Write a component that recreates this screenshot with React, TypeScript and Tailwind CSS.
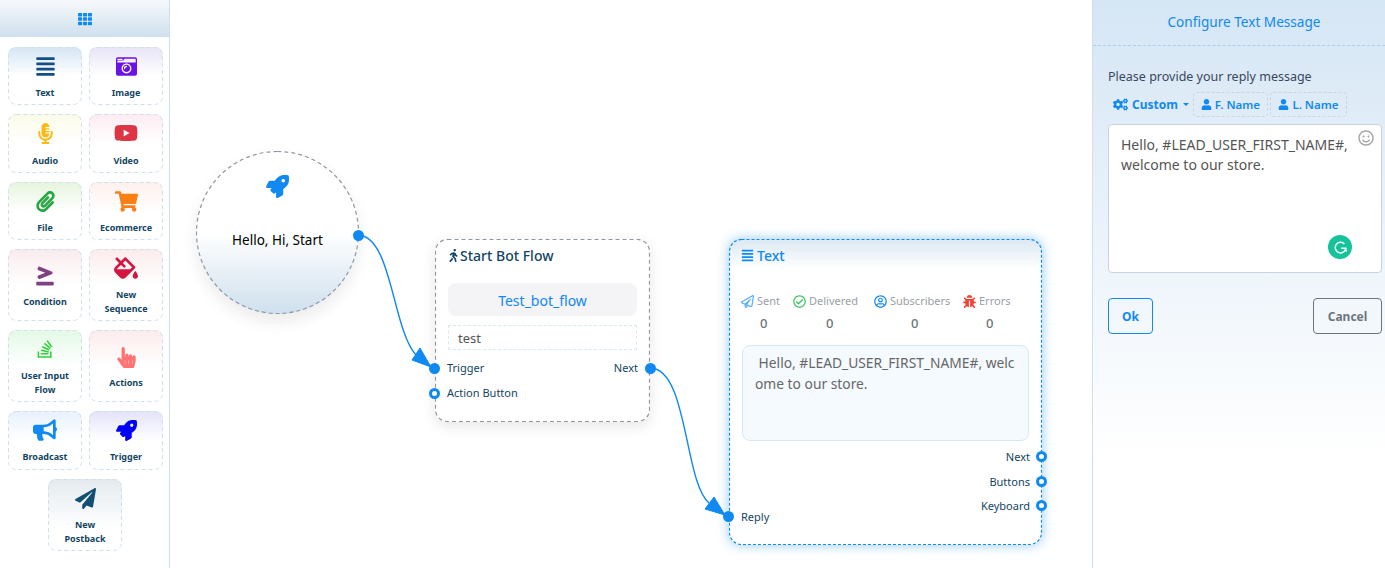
import React from "react";
import {
  FaAlignJustify, FaCameraRetro, FaMicrophoneAlt, FaYoutube, FaPaperclip, FaShoppingCart, FaGreaterThanEqual,
  FaFillDrip, FaStackOverflow, FaHandPointer, FaBullhorn, FaRocket, FaPaperPlane, FaTh, FaWalking,
  FaRegPaperPlane, FaRegCheckCircle, FaRegUserCircle, FaBug, FaCogs, FaUser, FaRegSmile,
} from "react-icons/fa";

const font = { fontFamily: '"Noto Sans", "Open Sans", sans-serif' };

function Dash({ color, rx, dash = "4 3", sw = 1 }: { color: string; rx: string | number; dash?: string; sw?: number }) {
  return (
    <svg className="pointer-events-none absolute left-[-2px] top-[-2px] h-[calc(100%+4px)] w-[calc(100%+4px)]">
      <rect x="0.5" y="0.5" rx={rx} ry={rx} fill="none" stroke={color} strokeWidth={sw} strokeDasharray={dash} className="[height:calc(100%-1px)] [width:calc(100%-1px)]" />
    </svg>
  );
}

function Card({ icon, label, grad, h, pt = "pt-[4px]", mt = "mt-[7px]" }: { icon: React.ReactNode; label: React.ReactNode; grad: string; h: string; pt?: string; mt?: string }) {
  return (
    <div className={`relative flex flex-col items-center rounded-lg border-2 border-transparent bg-origin-border ${pt} ${grad} ${h}`}>
      <Dash color="#cfdfee" rx={8} />
      <div className="flex h-[26px] items-center justify-center">{icon}</div>
      <div className={`text-center text-[9px] font-bold leading-[13.5px] text-[#134563] ${mt}`}>{label}</div>
    </div>
  );
}

function Port({ filled, className }: { filled?: boolean; className: string }) {
  return (
    <span className={`absolute h-[11px] w-[11px] rounded-full border-[3px] border-[#1089f2] ${filled ? "bg-[#1089f2]" : "bg-white"} ${className}`} />
  );
}

function Sidebar() {
  return (
    <aside className="h-full w-[170px] shrink-0 border-r border-[#cfdfee] bg-white">
      <div className="flex h-[37px] items-center justify-center bg-gradient-to-b from-[#f6f9fb] to-[#cfe0ee]">
        <FaTh className="text-[14px] text-[#1089f2]" />
      </div>
      <div className="grid grid-cols-[74px_74px] gap-x-[7px] gap-y-[9px] pl-[8px] pt-[10px]">
        <Card h="h-[58px]" grad="bg-gradient-to-b from-[#d4e6f4] to-white to-50%" icon={<FaAlignJustify className="text-[21px] text-[#134f86]" />} label="Text" />
        <Card h="h-[58px]" grad="bg-gradient-to-b from-[#e8e4f6] to-white to-50%" icon={<FaCameraRetro className="text-[21px] text-[#6a11e8]" />} label="Image" />
        <Card h="h-[59px]" mt="mt-[8px]" grad="bg-gradient-to-b from-[#fbfbe9] to-white to-50%" icon={<FaMicrophoneAlt className="text-[21px] text-[#fdb913]" />} label="Audio" />
        <Card h="h-[59px]" mt="mt-[8px]" grad="bg-gradient-to-b from-[#fcecf3] to-white to-50%" icon={<FaYoutube className="text-[24px] text-[#dc3545]" />} label="Video" />
        <Card h="h-[58px]" grad="bg-gradient-to-b from-[#e6f4dc] to-white to-50%" icon={<FaPaperclip className="text-[21px] text-[#28a745]" />} label="File" />
        <Card h="h-[58px]" grad="bg-gradient-to-b from-[#fdf0ec] to-white to-50%" icon={<FaShoppingCart className="text-[23px] text-[#fd7e14]" />} label="Ecommerce" />
        <Card h="h-[72px]" pt="pt-[12px]" mt="mt-[6px]" grad="bg-gradient-to-b from-[#f9ebed] to-white to-50%" icon={<FaGreaterThanEqual className="text-[20px] text-[#7f4182]" />} label="Condition" />
        <Card h="h-[72px]" grad="bg-gradient-to-b from-[#fbecec] to-white to-50%" icon={<FaFillDrip className="text-[24px] text-[#d3153f]" />} label={<>New<br />Sequence</>} />
        <Card h="h-[72px]" grad="bg-gradient-to-b from-[#e3f9e5] to-white to-50%" icon={<FaStackOverflow className="text-[20px] text-[#2fd13d]" />} label={<>User Input<br />Flow</>} />
        <Card h="h-[72px]" pt="pt-[12px]" mt="mt-[6px]" grad="bg-gradient-to-b from-[#fcecec] to-white to-50%" icon={<FaHandPointer className="text-[21px] text-[#ff7373]" />} label="Actions" />
        <Card h="h-[59px]" grad="bg-gradient-to-b from-[#e9f1fd] to-white to-50%" icon={<FaBullhorn className="text-[24px] text-[#1089f2]" />} label="Broadcast" />
        <Card h="h-[59px]" grad="bg-gradient-to-b from-[#e4e2fa] to-white to-50%" icon={<FaRocket className="text-[21px] text-[#0000f5]" />} label="Trigger" />
      </div>
      <div className="pl-[48px] pt-[9px]">
        <Card h="h-[72px] w-[74px]" grad="bg-gradient-to-b from-[#e4ebef] to-white to-70%" icon={<FaPaperPlane className="text-[21px] text-[#134f72]" />} label={<>New<br />Postback</>} />
      </div>
    </aside>
  );
}

function Wires() {
  return (
    <svg className="pointer-events-none absolute left-[-170px] top-0 z-10 h-[568px] w-[1385px]" viewBox="0 0 1385 568" fill="none">
      <path d="M358 235 C392 236 392 328 416 355" stroke="#1089f2" strokeWidth="1.4" />
      <path d="M431 367 L420 348 L412 360 Z" fill="#1089f2" stroke="#1089f2" strokeWidth="1" strokeLinejoin="round" />
      <path d="M650 368 C688 368 684 482 709 503" stroke="#1089f2" strokeWidth="1.4" />
      <path d="M725 515 L714 497 L705 509 Z" fill="#1089f2" stroke="#1089f2" strokeWidth="1" strokeLinejoin="round" />
    </svg>
  );
}

function StartCircle() {
  return (
    <div className="absolute left-[26px] top-[151px] flex h-[163px] w-[163px] flex-col items-center rounded-full border-2 border-transparent bg-gradient-to-b from-white from-50% to-[#cfe0ee] bg-origin-border pt-[22px] shadow-[0_8px_16px_rgba(0,0,0,0.08)]">
      <Dash color="#8f98a0" rx={81} sw={1.2} />
      <FaRocket className="text-[23px] text-[#1089f2]" />
      <div className="mt-[32px] text-[13.5px] leading-[20px] text-black">Hello, Hi, Start</div>
      <Port filled className="right-[-7px] top-[77px]" />
    </div>
  );
}

function StartBotFlow() {
  return (
    <div className="absolute left-[265px] top-[239px] h-[183px] w-[215px] rounded-xl border-2 border-transparent bg-white px-[11px] pt-[4px] shadow-[0_4px_14px_rgba(0,0,0,0.1)]">
      <Dash color="#8f98a0" rx={12} sw={1.2} />
      <div className="ml-[-1px] flex h-[21px] items-center text-[14px] font-medium text-[#134563]">
        <FaWalking className="text-[13px]" /> Start Bot Flow
      </div>
      <div className="mt-[17px] flex h-[33px] items-center justify-center rounded-lg bg-[#f4f3f5] pt-[1px] text-[14px] text-[#1089f2]">Test_bot_flow</div>
      <div className="mt-[9px] flex h-[25px] items-center border border-dashed border-[#d8e8f5] pl-[9px] pt-[2px] text-[13px] text-[#555]">test</div>
      <div className="mx-[-1px] mt-[9px] flex h-[18px] items-center justify-between text-[11px] text-[#134563]">
        <span>Trigger</span><span>Next</span>
      </div>
      <div className="ml-[-1px] mt-[7px] flex h-[18px] items-center text-[11px] text-[#134563]">Action Button</div>
      <Port filled className="left-[-8px] top-[122px]" />
      <Port className="left-[-8px] top-[147px]" />
      <Port filled className="right-[-8px] top-[122px]" />
    </div>
  );
}

function Stat({ icon, label, pad }: { icon: React.ReactNode; label: string; pad: string }) {
  return (
    <div>
      <div className="flex h-[16px] items-center gap-[3px] whitespace-nowrap text-[11px] text-[#9aa0a6]">{icon}{label}</div>
      <div className={`mt-[5px] text-[13px] font-medium leading-[18px] text-[#6c757d] ${pad}`}>0</div>
    </div>
  );
}

function TextNode() {
  return (
    <div className="absolute left-[559px] top-[239px] h-[306px] w-[313px] rounded-xl border-2 border-transparent bg-white bg-gradient-to-b from-[#dbe8f2] to-white to-[30px] bg-origin-border px-[11px] pt-[4px] shadow-[0_0_12px_rgba(16,137,242,0.45)]">
      <Dash color="#1089f2" rx={12} dash="3 2" sw={1.2} />
      <div className="ml-[-1px] flex h-[21px] items-center gap-[3px] text-[14px] font-medium text-[#1089f2]">
        <FaAlignJustify className="text-[13px]" /> Text
      </div>
      <div className="ml-[-1px] mt-[27px] grid grid-cols-[52px_81px_89px_48px]">
        <Stat pad="pl-[19px]" icon={<FaRegPaperPlane className="text-[13px] text-[#5aaef5]" />} label="Sent" />
        <Stat pad="pl-[33px]" icon={<FaRegCheckCircle className="text-[13px] text-[#3cc35f]" />} label="Delivered" />
        <Stat pad="pl-[37px]" icon={<FaRegUserCircle className="text-[13px] text-[#1089f2]" />} label="Subscribers" />
        <Stat pad="pl-[23px]" icon={<FaBug className="text-[13px] text-[#f44336]" />} label="Errors" />
      </div>
      <div className="mt-[13px] h-[96px] w-[287px] rounded-lg border border-[#d5e8f8] bg-[#f5faff] pl-[12px] pt-[6px] text-[13.8px] leading-[21px] text-[#666]">
        &nbsp;Hello, #LEAD_USER_FIRST_NAME#, welc<br />ome to our store.
      </div>
      <div className="mr-[-1px] mt-[7px] flex flex-col items-end text-[11px] leading-[18px] text-[#134563]">
        <span>Next</span><span className="mt-[7px]">Buttons</span><span className="mt-[6px]">Keyboard</span>
      </div>
      <div className="ml-[-1px] mt-[-7px] text-[11px] leading-[18px] text-[#134563]">Reply</div>
      <Port className="right-[-7px] top-[210px]" />
      <Port className="right-[-7px] top-[235px]" />
      <Port className="right-[-7px] top-[259px]" />
      <Port filled className="left-[-8px] top-[270px]" />
    </div>
  );
}

function NameChip({ w, label }: { w: string; label: string }) {
  return (
    <span className={`relative flex h-[25px] items-center justify-center gap-[3px] rounded border-2 border-transparent ${w}`}>
      <Dash color="#cfd4d8" rx={3} dash="3 2" />
      <FaUser className="text-[11px]" /> {label}
    </span>
  );
}

function Panel() {
  return (
    <aside className="h-full w-[293px] shrink-0 border-l border-[#cfdfee] bg-gradient-to-b from-[#d5e6f5] to-white to-80%">
      <div className="flex h-[46px] items-center justify-center border-b border-dashed border-[#a9cfee] pl-[10px] text-[13.6px] text-[#1089f2]">Configure Text Message</div>
      <div className="pl-[15px] pr-[3px]">
        <div className="mt-[22px] text-[12.5px] leading-[18px] text-[#3a4660]">Please provide your reply message</div>
        <div className="mt-[6px] flex h-[25px] items-center gap-[2px] text-[11.5px] font-semibold text-[#1089f2]">
          <span className="mr-[2px] flex items-center gap-[4px] pl-[5px] text-[12px] font-bold">
            <FaCogs className="text-[15px]" /> Custom
            <span className="ml-[1px] h-0 w-0 border-x-[3.5px] border-t-[3.5px] border-x-transparent border-t-[#1089f2]" />
          </span>
          <NameChip w="w-[75px]" label="F. Name" />
          <NameChip w="w-[77px]" label="L. Name" />
        </div>
        <div className="relative mt-[7px] h-[149px] rounded border border-[#ccd3de] bg-white px-[12px] pt-[10px] text-[14px] leading-[20px] text-[#555]">
          Hello, #LEAD_USER_FIRST_NAME#,<br />welcome to our store.
          <FaRegSmile className="absolute right-[7px] top-[5px] text-[16px] text-[#a8a8a8]" />
          <span className="absolute bottom-[13px] right-[29px] flex h-[24px] w-[24px] items-center justify-center rounded-full bg-[#15c39a]">
            <svg viewBox="0 0 24 24" className="h-[17px] w-[17px]" fill="none" stroke="#fff" strokeWidth="2">
              <path d="M17.5 7A7.5 7.5 0 1 0 19.5 13H13" />
              <path d="M20 18L19.5 13" />
            </svg>
          </span>
        </div>
        <div className="mt-[25px] flex justify-between">
          <button className="h-[36px] w-[45px] rounded border border-[#1089f2] pt-[1px] text-[12px] font-bold text-[#1089f2]">Ok</button>
          <button className="h-[36px] w-[69px] rounded border border-[#6c757d] pt-[1px] text-[12px] font-bold text-[#6c757d]">Cancel</button>
        </div>
      </div>
    </aside>
  );
}

export default function App() {
  return (
    <div className="flex h-[568px] w-[1385px] overflow-hidden bg-white" style={font}>
      <Sidebar />
      <main className="relative min-w-0 flex-1">
        <StartCircle />
        <StartBotFlow />
        <TextNode />
        <Wires />
      </main>
      <Panel />
    </div>
  );
}
